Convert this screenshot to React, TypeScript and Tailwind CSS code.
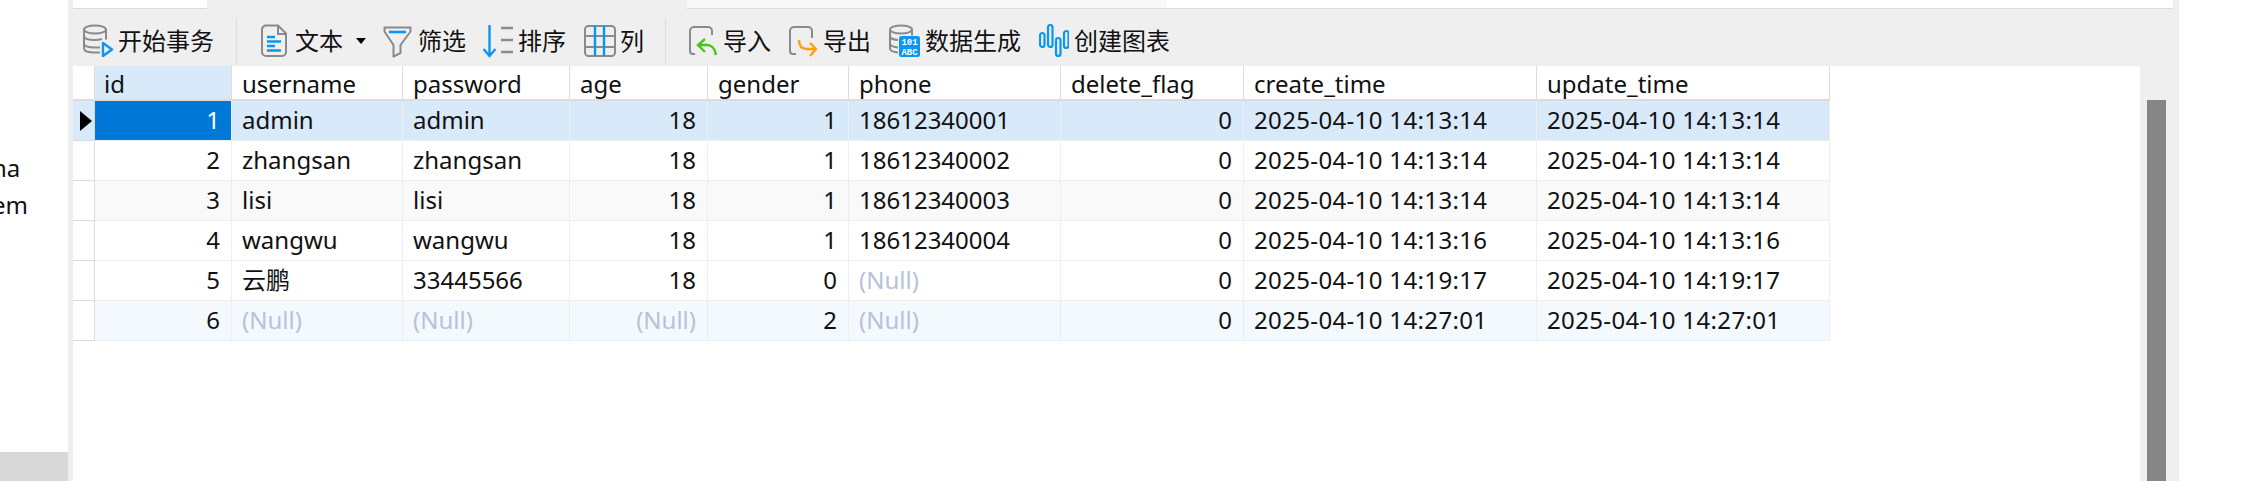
const GRAY = "#8a8a8a";
const BLUE = "#0a96f5";

const DbIcon = () => (
  <svg width="32" height="34" viewBox="0 0 32 34" fill="none" strokeWidth="2">
    <ellipse cx="12" cy="5.500" rx="11" ry="4" stroke={GRAY} />
    <path d="M1 5.500v19c0 2.500 4 4 11 4h5M23 5.500v10M1 12c0 2.500 4 4 11 4 2.500 0 5-.3 7-1M1 19.500c0 2.500 4 4 11 4h5" stroke={GRAY} />
    <path d="M20 19v13l9-6.500z" stroke={BLUE} strokeWidth="2.400" strokeLinejoin="round" />
  </svg>
);

const TextIcon = () => (
  <svg width="26" height="34" viewBox="0 0 26 34" fill="none">
    <path d="M6 1.500h11l8 8V28a4 4 0 0 1-4 4H5a4 4 0 0 1-4-4V5.500a4 4 0 0 1 4-4z" stroke={GRAY} strokeWidth="2" />
    <path d="M17 2v8h8" stroke={GRAY} strokeWidth="2" />
    <path d="M6 13h8M6 17.500h14M6 22h8M6 26.500h14" stroke={BLUE} strokeWidth="2.400" />
  </svg>
);

const FilterIcon = () => (
  <svg width="30" height="34" viewBox="0 0 30 34" fill="none">
    <path d="M1.500 3.500h26v4L17.500 21v8l-7 3.500V21L1.500 7.500z" stroke={GRAY} strokeWidth="2" strokeLinejoin="round" />
    <path d="M6 8h17" stroke={BLUE} strokeWidth="2.600" />
  </svg>
);

const SortIcon = () => (
  <svg width="30" height="34" viewBox="0 0 30 34" fill="none">
    <path d="M6.500 1v31M.5 25l6 7 6-7" stroke={BLUE} strokeWidth="2.400" />
    <path d="M18 4h12M18 16h12M18 28h12" stroke={GRAY} strokeWidth="2.400" />
  </svg>
);

const GridIcon = () => (
  <svg width="32" height="34" viewBox="0 0 32 34" fill="none">
    <rect x="1" y="2" width="30" height="30" rx="3.500" stroke={GRAY} strokeWidth="2" />
    <path d="M1 12h30M1 23h30" stroke={GRAY} strokeWidth="2" />
    <path d="M11 2v30M20 2v30" stroke={BLUE} strokeWidth="2.400" />
  </svg>
);

const ImportIcon = () => (
  <svg width="30" height="34" viewBox="0 0 30 34" fill="none">
    <path d="M7 30H5a3 3 0 0 1-3-3V7a4 4 0 0 1 4-4h14a4 4 0 0 1 4 4v4" stroke={GRAY} strokeWidth="2" />
    <path d="M17 15l-7 6 7 7M10 21h9c4 0 8 3 9 10" stroke="#4ec21a" strokeWidth="2.400" />
  </svg>
);

const ExportIcon = () => (
  <svg width="30" height="34" viewBox="0 0 30 34" fill="none">
    <path d="M8 30H5a3 3 0 0 1-3-3V7a4 4 0 0 1 4-4h14a4 4 0 0 1 4 4v7" stroke={GRAY} strokeWidth="2" />
    <path d="M11 16c0 6 3 9 8 9h9M22 19l6 6-6 7" stroke="#ff9f0a" strokeWidth="2.400" />
  </svg>
);

const DataGenIcon = () => (
  <svg width="32" height="34" viewBox="0 0 32 34" fill="none">
    <ellipse cx="12" cy="5.500" rx="11" ry="4" stroke={GRAY} strokeWidth="2" />
    <path d="M1 5.500v19c0 2 3 3.500 8 4M23 5.500v6M1 12c0 2 3 4 8 4M1 19.500c0 2 3 3.500 8 4" stroke={GRAY} strokeWidth="2" />
    <rect x="10" y="12" width="21" height="21" rx="2.500" fill={BLUE} />
    <text x="20.500" y="21" fontSize="9" fontWeight="700" fill="#fff" textAnchor="middle" fontFamily="'Liberation Mono', monospace">101</text>
    <text x="20.500" y="31" fontSize="9" fontWeight="700" fill="#fff" textAnchor="middle" fontFamily="'Liberation Mono', monospace">ABC</text>
  </svg>
);

const ChartIcon = () => (
  <svg width="30" height="34" viewBox="0 0 30 34" fill="none" stroke={BLUE} strokeWidth="2.200">
    <rect x="1" y="9" width="4.500" height="14" rx="2.250" />
    <rect x="9" y="1" width="4.500" height="22" rx="2.250" />
    <rect x="17" y="14" width="4.500" height="18" rx="2.250" />
    <rect x="25" y="7" width="4.500" height="17" rx="2.250" />
  </svg>
);

const Tool = ({ icon, label, className }: { icon: React.ReactNode; label: string; className?: string }) => (
  <div className={`flex items-center ${className ?? ""}`}>
    {icon}
    <span>{label}</span>
  </div>
);

const Sep = ({ className }: { className: string }) => (
  <div className={`h-[46px] w-px bg-[#dcdcdc] ${className}`} />
);

const Toolbar = () => (
  <div className="flex h-[57px] items-center pt-[7px] pl-[10px] text-[24px] leading-none text-[#111]">
    <Tool icon={<DbIcon />} label="开始事务" className="gap-[3px]" />
    <Sep className="ml-[22px]" />
    <Tool icon={<TextIcon />} label="文本" className="ml-[24px] gap-[8px]" />
    <div className="ml-[13px] h-0 w-0 border-x-[5px] border-t-[6px] border-x-transparent border-t-black" />
    <Tool icon={<FilterIcon />} label="筛选" className="ml-[17px] gap-[5px]" />
    <Tool icon={<SortIcon />} label="排序" className="ml-[17px] gap-[5px]" />
    <Tool icon={<GridIcon />} label="列" className="ml-[18px] gap-[4px]" />
    <Sep className="ml-[21px]" />
    <Tool icon={<ImportIcon />} label="导入" className="ml-[22px] gap-[5px]" />
    <Tool icon={<ExportIcon />} label="导出" className="ml-[17px] gap-[5px]" />
    <Tool icon={<DataGenIcon />} label="数据生成" className="ml-[18px] gap-[4px]" />
    <Tool icon={<ChartIcon />} label="创建图表" className="ml-[18px] gap-[5px]" />
  </div>
);

const columns = [
  { name: "id", right: true },
  { name: "username" },
  { name: "password" },
  { name: "age", right: true },
  { name: "gender", right: true },
  { name: "phone" },
  { name: "delete_flag", right: true },
  { name: "create_time", date: true },
  { name: "update_time", date: true },
];

const rows: (string | null)[][] = [
  ["1", "admin", "admin", "18", "1", "18612340001", "0", "2025-04-10 14:13:14", "2025-04-10 14:13:14"],
  ["2", "zhangsan", "zhangsan", "18", "1", "18612340002", "0", "2025-04-10 14:13:14", "2025-04-10 14:13:14"],
  ["3", "lisi", "lisi", "18", "1", "18612340003", "0", "2025-04-10 14:13:14", "2025-04-10 14:13:14"],
  ["4", "wangwu", "wangwu", "18", "1", "18612340004", "0", "2025-04-10 14:13:16", "2025-04-10 14:13:16"],
  ["5", "云鹏", "33445566", "18", "0", null, "0", "2025-04-10 14:19:17", "2025-04-10 14:19:17"],
  ["6", null, null, null, "2", null, "0", "2025-04-10 14:27:01", "2025-04-10 14:27:01"],
];

const rowBg = ["bg-[#d8e9f9]", "bg-white", "bg-[#f9f9f9]", "bg-white", "bg-white", "bg-[#f4f9fe]"];

const DataGrid = () => (
  <div className="grid grid-cols-[22px_137px_171px_167px_138px_141px_212px_183px_293px_293px] grid-rows-[35px_repeat(6,40px)] text-[24px] leading-none text-[#111]">
    <div className="border-r border-b-2 border-[#dcdcdc] bg-white" />
    {columns.map((c, i) => (
      <div
        key={c.name}
        className={`flex items-center border-r border-b-2 border-[#dcdcdc] pt-[2px] ${i === 0 ? "bg-[#d8e9f9] pl-[9px]" : "bg-white pl-[10px]"}`}
      >
        {c.name}
      </div>
    ))}
    {rows.map((row, r) => (
      <div key={r} className="contents">
        <div className={`flex items-center border-r border-b border-[#dcdcdc] pl-[7px] ${r === 0 ? "bg-[#d8e9f9]" : "bg-white"}`}>
          {r === 0 && <div className="h-0 w-0 border-y-[10px] border-l-[12px] border-y-transparent border-l-black" />}
        </div>
        {row.map((cell, c) => {
          const selected = r === 0 && c === 0;
          return (
            <div
              key={c}
              className={`flex items-center border-r border-b border-[#eeeeee] pr-[11px] pb-[2px] pl-[10px] ${columns[c].right ? "justify-end" : ""} ${columns[c].date ? "tracking-[0.35px]" : ""} ${selected ? "bg-[#0078d7] text-white" : rowBg[r]} ${cell === null ? "text-[#b7c2da]" : ""}`}
            >
              {cell ?? "(Null)"}
            </div>
          );
        })}
      </div>
    ))}
  </div>
);

export default function App() {
  return (
    <div className="flex h-[481px] w-[2254px] overflow-hidden bg-white font-['Noto_Sans','Noto_Sans_CJK_SC',sans-serif]">
      {/* left tree panel, cut off by the crop */}
      <div className="flex w-[68px] flex-col overflow-hidden text-[24px] leading-none text-[#111]">
        <div className="mt-[156px] -ml-[8px]">na</div>
        <div className="mt-[13px] -ml-[8px]">em</div>
        <div className="mt-auto h-[29px] bg-[#d8d8d8]" />
      </div>

      <div className="flex w-[2111px] flex-col bg-[#efefef] pl-[5px]">
        {/* tab strip */}
        <div className="flex h-[9px] pr-[6px]">
          <div className="w-[134px] border-b border-[#dcdcdc] bg-white" />
          <div className="ml-[480px] w-[480px] border-b border-[#dcdcdc] bg-[#f8f8f8]" />
          <div className="flex-1 border-b border-[#dcdcdc] bg-white" />
        </div>
        <Toolbar />
        <div className="flex min-h-0 flex-1">
          <div className="w-[2067px] bg-white">
            <DataGrid />
          </div>
          {/* scrollbar */}
          <div className="flex-1 pt-[34px] pl-[7px]">
            <div className="h-full w-[19px] bg-[#868686]" />
          </div>
        </div>
      </div>
    </div>
  );
}
